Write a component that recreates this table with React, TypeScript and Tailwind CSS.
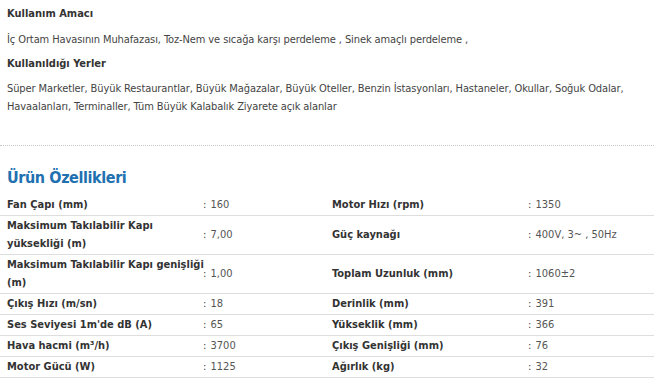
type Row = { label: string[]; value: string; tall?: boolean };

const left: Row[] = [
  { label: ["Fan Çapı (mm)"], value: "160" },
  { label: ["Maksimum Takılabilir Kapı", "yüksekliği (m)"], value: "7,00", tall: true },
  { label: ["Maksimum Takılabilir Kapı genişliği", "(m)"], value: "1,00", tall: true },
  { label: ["Çıkış Hızı (m/sn)"], value: "18" },
  { label: ["Ses Seviyesi 1m'de dB (A)"], value: "65" },
  { label: ["Hava hacmi (m³/h)"], value: "3700" },
  { label: ["Motor Gücü (W)"], value: "1125" },
];

const right: Row[] = [
  { label: ["Motor Hızı (rpm)"], value: "1350" },
  { label: ["Güç kaynağı"], value: "400V, 3~ , 50Hz", tall: true },
  { label: ["Toplam Uzunluk (mm)"], value: "1060±2", tall: true },
  { label: ["Derinlik (mm)"], value: "391" },
  { label: ["Yükseklik (mm)"], value: "366" },
  { label: ["Çıkış Genişliği (mm)"], value: "76" },
  { label: ["Ağırlık (kg)"], value: "32" },
];

function SpecTable({ rows, width }: { rows: Row[]; width: string }) {
  return (
    <div className={`flex flex-col ${width}`}>
      {rows.map((r, i) => (
        <div
          key={i}
          className={`flex items-center border-b border-[#dedede] ${r.tall ? "h-[39px]" : "h-[21px]"}`}
        >
          <div className="w-[196px] shrink-0 pl-[7px] font-bold text-[#333] leading-[18px] whitespace-nowrap">
            {r.label.map((l, j) => (
              <div key={j}>{l}</div>
            ))}
          </div>
          <div className="pl-[7px] text-[#555] leading-[18px] whitespace-nowrap">
            <span className="text-[#444] mr-[1px]">:</span> {r.value}
          </div>
        </div>
      ))}
    </div>
  );
}

export default function App() {
  return (
    <div
      className="w-[654px] h-[380px] overflow-hidden bg-white text-[11px] text-[#444]"
      style={{ fontFamily: '"DejaVu Sans Condensed", "DejaVu Sans", sans-serif' }}
    >
      <div className="px-[7px] pt-[5px]">
        <div className="font-bold text-[#333] leading-[18px]">Kullanım Amacı</div>
        <p className="mt-[8px] leading-[18px] tracking-[-0.1px]">
          İç Ortam Havasının Muhafazası, Toz-Nem ve sıcağa karşı perdeleme , Sinek amaçlı perdeleme ,
        </p>
        <div className="mt-[6px] font-bold text-[#333] leading-[18px]">Kullanıldığı Yerler</div>
        <p className="mt-[7px] leading-[18px] tracking-[-0.1px]">
          Süper Marketler, Büyük Restaurantlar, Büyük Mağazalar, Büyük Oteller, Benzin İstasyonları, Hastaneler, Okullar, Soğuk Odalar,
          <br />
          Havaalanları, Terminaller, Tüm Büyük Kalabalık Ziyarete açık alanlar
        </p>
      </div>

      <div className="mt-[29px] border-t border-dotted border-[#c8c8c8]" />

      <h2 className="mt-[21px] px-[7px] text-[16px] font-bold leading-[22px] tracking-[-0.4px] text-[#2170b0]">
        Ürün Özellikleri
      </h2>

      <div className="mt-[6px] flex">
        <SpecTable rows={left} width="w-[325px]" />
        <SpecTable rows={right} width="w-[329px]" />
      </div>
    </div>
  );
}
